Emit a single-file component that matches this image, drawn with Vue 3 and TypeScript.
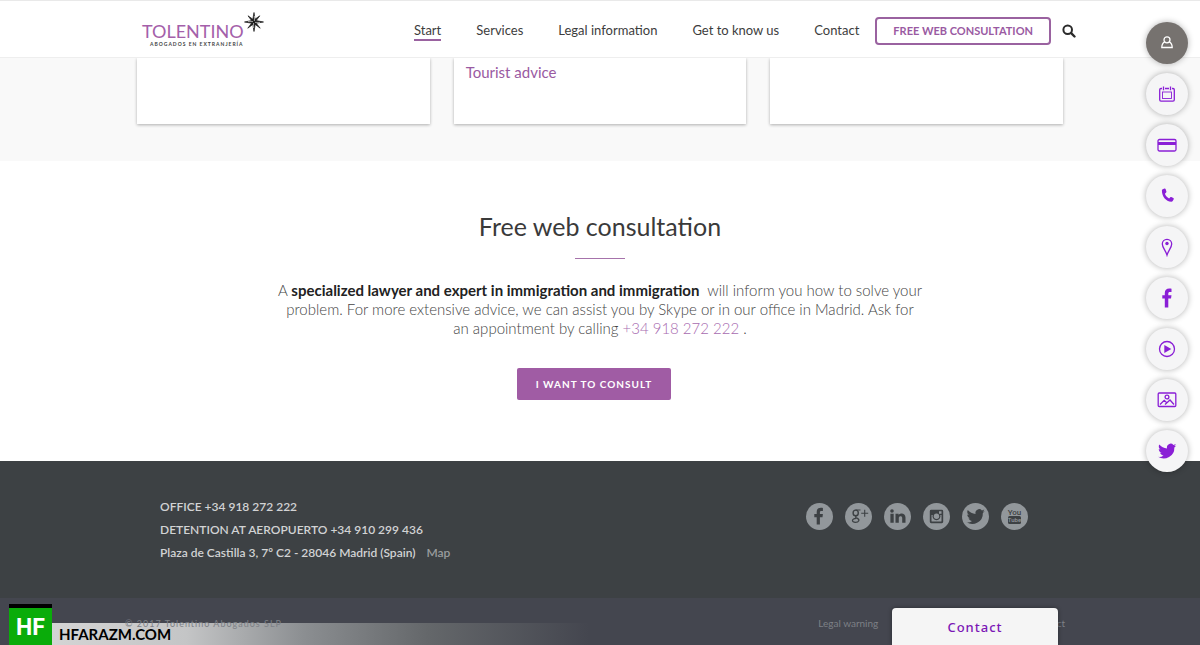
<script setup lang="ts">
interface NavItem {
  label: string
  active?: boolean
}

const navItems: NavItem[] = [
  { label: 'Start', active: true },
  { label: 'Services' },
  { label: 'Legal information' },
  { label: 'Get to know us' },
  { label: 'Contact' },
]

const cards: string[] = ['', 'Tourist advice', '']

const quickActions: string[] = [
  'Account',
  'Calendar',
  'Payment',
  'Phone',
  'Location',
  'Facebook',
  'Video',
  'Gallery',
  'Twitter',
]

const socials: string[] = ['Facebook', 'Google Plus', 'LinkedIn', 'Instagram', 'Twitter', 'YouTube']
</script>

<template>
  <div class="page">
    <header class="header">
      <div class="header-row">
        <a href="#" class="logo" aria-label="Tolentino">
          <span class="logo-name">TOLENTINO</span>
          <span class="logo-sub">ABOGADOS EN EXTRANJERÍA</span>
          <svg class="logo-star" viewBox="0 0 20 20" aria-hidden="true">
            <path fill="#1c1c1c" stroke="#1c1c1c" stroke-width=".7" d="M10 .5l1 6.700 4.800-3.400-3.600 4.800L19.500 10l-7.300 1.200 4 5-5-3.800L10 19.500l-1.200-7.100-5 3.800 3.800-5L.5 10l7.100-1.400-3.600-4.800L8.800 7.200z" />
            <path stroke="#fff" stroke-width=".6" d="M10.400 4v5M11 10.400h5M9.600 11v5M4 9.600h5" />
          </svg>
        </a>
        <nav class="nav" aria-label="Main">
          <a v-for="item in navItems" :key="item.label" href="#" class="nav-link" :class="{ active: item.active }">{{ item.label }}</a>
        </nav>
        <a href="#" class="outline-button">FREE WEB CONSULTATION</a>
        <button class="search" type="button" aria-label="Search">
          <svg viewBox="0 0 14 14" fill="none" stroke="#2b2b2b" stroke-linecap="round">
            <circle cx="5.700" cy="5.700" r="4.300" stroke-width="2" />
            <path d="M9.200 9.200l3.300 3.300" stroke-width="2.400" />
          </svg>
        </button>
      </div>
    </header>

    <section class="cards-band">
      <div class="cards">
        <article v-for="(card, i) in cards" :key="i" class="card">
          <a v-if="card" href="#">{{ card }}</a>
        </article>
      </div>
    </section>

    <main class="consult">
      <h2>Free web consultation</h2>
      <div class="rule"></div>
      <p>
        A <strong>specialized lawyer and expert in immigration and immigration</strong>&nbsp; will inform you how to solve your
        problem. For more extensive advice, we can assist you by Skype or in our office in Madrid. Ask for an appointment by
        calling <a href="#">+34 918 272 222</a> .
      </p>
      <button class="consult-button" type="button">I WANT TO CONSULT</button>
    </main>

    <footer class="footer">
      <div class="footer-main">
        <address>
          <div>OFFICE +34 918 272 222</div>
          <div>DETENTION AT AEROPUERTO +34 910 299 436</div>
          <div>Plaza de Castilla 3, 7º C2 - 28046 Madrid (Spain) <a href="#">Map</a></div>
        </address>
        <div class="socials">
          <a v-for="name in socials" :key="name" href="#" :aria-label="name">
            <svg viewBox="0 0 27 27" fill="#3d4144">
              <path v-if="name === 'Facebook'" d="M10.700 21.500v-7.200H8.300v-3.200h2.400V9c0-2.800 1.500-4.200 4.200-4.200.9 0 1.600.1 2 .2v3h-1.500c-1.200 0-1.500.5-1.500 1.500v1.600h3l-.4 3.200h-2.600v7.200z" />
              <g v-else-if="name === 'Google Plus'" fill="none" stroke="#3d4144">
                <ellipse cx="10.700" cy="9.900" rx="2.600" ry="2.800" stroke-width="1.400" />
                <path d="M10.500 7h5M12 12.500c-2 1.100-2 1.700 0 2.600 3.300 1.500 2 4.200-1.600 4.200-3.900 0-4.200-3.400.7-3.900" stroke-width="1.200" />
                <path d="M19.700 6.800v7M16.200 10.300h7" stroke-width="1.100" />
              </g>
              <path v-else-if="name === 'LinkedIn'" d="M6.400 10.800h3.300v9H6.400zM8 6.200a1.800 1.800 0 1 1 0 3.600 1.800 1.800 0 0 1 0-3.600zM11.500 10.800h3.100v1.300c1.500-2.400 6.900-2.200 6.900 2.400v5.300h-3.300V15c0-2.500-3.400-2.200-3.400 0v4.800h-3.300z" />
              <g v-else-if="name === 'Instagram'">
                <path fill-rule="evenodd" d="M8.200 6.800h10.600a1.400 1.400 0 0 1 1.400 1.400v10.600a1.400 1.400 0 0 1-1.400 1.400H8.200a1.400 1.400 0 0 1-1.400-1.400V8.200a1.400 1.400 0 0 1 1.400-1.400zM8.500 12v6a.6.6 0 0 0 .6.600h8.800a.6.600 0 0 0 .6-.6v-6h-1.200a4 4 0 1 1-7.600 0zM16 8.300v2.400h2.500V8.300z" />
                <circle cx="13.500" cy="13.300" r="2.700" fill="#92979b" />
              </g>
              <path v-else-if="name === 'Twitter'" transform="translate(4.500 4.500) scale(.76)" d="M24 4.600c-.9.400-1.800.7-2.800.8 1-.6 1.800-1.600 2.200-2.700-1 .6-2 1-3.100 1.200A4.900 4.900 0 0 0 11.900 8.400C7.800 8.200 4.200 6.200 1.700 3.200c-1.300 2.200-.7 5.100 1.500 6.600-.8 0-1.600-.2-2.200-.6 0 2.300 1.600 4.400 3.900 4.900-.7.200-1.500.2-2.200.1.600 2 2.400 3.400 4.600 3.400A9.900 9.900 0 0 1 0 19.500a14 14 0 0 0 21.500-12.400c1-.7 1.800-1.600 2.500-2.500z" />
              <g v-else>
                <text class="you" x="13.500" y="11.500" text-anchor="middle">You</text>
                <rect x="7" y="13" width="13" height="8" rx="1.500" />
                <text class="tube" x="13.500" y="19" text-anchor="middle">Tube</text>
              </g>
            </svg>
          </a>
        </div>
      </div>
      <div class="footer-bottom">
        <span class="copyright">© 2017 Tolentino Abogados SLP</span>
        <div class="legal">
          <a href="#">Legal warning</a>
          <a href="#">Contact</a>
        </div>
      </div>
    </footer>

    <aside class="quick" aria-label="Quick actions">
      <button v-for="name in quickActions" :key="name" type="button" :aria-label="name" :class="{ dark: name === 'Account' }">
        <svg viewBox="0 0 20 20" fill="none" stroke="currentColor" stroke-width="1.300">
          <g v-if="name === 'Account'">
            <circle cx="10" cy="6.800" r="3" />
            <path d="M7.700 8.800C5.700 9.800 4.800 11.600 4.800 14.500h10.400c0-2.900-.9-4.700-2.900-5.700" />
          </g>
          <g v-else-if="name === 'Calendar'">
            <path d="M5 4.500H4A1.300 1.300 0 0 0 2.700 5.800v10A1.300 1.300 0 0 0 4 17.100h12a1.300 1.300 0 0 0 1.300-1.300v-10A1.300 1.300 0 0 0 16 4.500h-1M8 4.500h4M6.500 2.500v3.700M13.500 2.500v3.700" />
            <rect x="5.500" y="8" width="9" height="6.500" stroke-width=".9" />
          </g>
          <g v-else-if="name === 'Payment'">
            <rect x="1" y="4.500" width="18" height="11.500" rx="1.500" />
            <path d="M1 7h18v3H1z" fill="currentColor" stroke="none" />
          </g>
          <path v-else-if="name === 'Phone'" fill="currentColor" stroke="none" d="M5.700 3.200l1.800-.7c.5-.2.900 0 1.100.5l.8 2.500c.1.400 0 .7-.3 1L7.900 7.700c.8 2.300 2.200 3.700 4.200 4.700l1.200-1.200c.3-.3.600-.3 1-.2l2 1c.5.300.7.700.4 1.200l-1 1.900c-.3.500-.7.700-1.300.7C8.700 15.500 4.800 10.500 4.900 4.300c0-.6.3-.9.800-1.100z" />
          <g v-else-if="name === 'Location'">
            <path d="M10 18C8.800 13.800 5.300 10.500 5.300 7a4.700 4.700 0 0 1 9.400 0c0 3.500-3.500 6.800-4.700 11z" />
            <circle cx="10" cy="6.500" r="1.700" fill="currentColor" stroke="none" />
          </g>
          <path v-else-if="name === 'Facebook'" fill="currentColor" stroke="none" d="M7.800 19.500v-9H5.300V7.200h2.500V5c0-3 1.600-4.500 4.500-4.500.9 0 1.800.1 2.200.2V4h-1.600c-1.200 0-1.600.6-1.600 1.600v1.600h3.200l-.5 3.300h-2.700v9z" />
          <g v-else-if="name === 'Video'">
            <circle cx="10" cy="10" r="7.500" />
            <path d="M7.300 5.900l7 4.100-7 4.100z" fill="currentColor" stroke="none" />
          </g>
          <g v-else-if="name === 'Gallery'">
            <rect x="1.200" y="3" width="17.600" height="13.500" rx="1" />
            <path d="M3 14.500l4.200-4.200 2.300 2.200M8 14.500l5-4.500 4 4.500" />
            <circle cx="10" cy="7" r="1.900" />
          </g>
          <path v-else fill="currentColor" stroke="none" transform="translate(1 1) scale(.76)" d="M24 4.600c-.9.400-1.800.7-2.800.8 1-.6 1.800-1.600 2.200-2.700-1 .6-2 1-3.100 1.200A4.900 4.900 0 0 0 11.900 8.400C7.800 8.200 4.200 6.200 1.700 3.200c-1.300 2.200-.7 5.100 1.500 6.600-.8 0-1.600-.2-2.200-.6 0 2.300 1.600 4.400 3.900 4.900-.7.200-1.500.2-2.200.1.600 2 2.400 3.400 4.600 3.400A9.900 9.900 0 0 1 0 19.500a14 14 0 0 0 21.500-12.400c1-.7 1.800-1.600 2.500-2.500z" />
        </svg>
      </button>
    </aside>

    <div class="watermark">
      <span class="mark">HF</span>
      <span class="site">HFARAZM.COM</span>
    </div>

    <button class="contact-tab" type="button">Contact</button>
  </div>
</template>

<style>
body {
  margin: 0;
}
</style>

<style scoped>
.page {
  position: relative;
  display: flex;
  flex-direction: column;
  min-height: 100vh;
  overflow: hidden;
  background: #fff;
  color: #3d3d3d;
  font-family: Lato, 'Open Sans', sans-serif;
}

.page * {
  box-sizing: border-box;
}

a {
  color: inherit;
  text-decoration: none;
}

button {
  font-family: inherit;
  cursor: pointer;
}

.header {
  position: relative;
  background: #fff;
  border-top: 1px solid #e9e9e9;
  border-bottom: 1px solid #eee;
}

.header-row {
  display: flex;
  align-items: center;
  max-width: 952px;
  height: 56px;
  margin: 0 auto;
  padding-top: 4px;
}

.logo {
  position: relative;
  display: flex;
  flex-direction: column;
  width: 140px;
  padding: 6px 0 0 18px;
  margin-right: auto;
}

.logo-name {
  color: #a45faa;
  font-size: 18px;
  line-height: 20px;
}

.logo-sub {
  padding-left: 8px;
  color: #444;
  font-size: 5px;
  font-weight: 700;
  line-height: 6px;
  letter-spacing: 1px;
  white-space: nowrap;
}

.logo-star {
  position: absolute;
  top: -3px;
  right: 0;
  width: 20px;
  height: 20px;
}

.nav {
  display: flex;
  gap: 35px;
  margin-right: 16px;
}

.nav-link {
  border-bottom: 2px solid transparent;
  font-size: 13px;
  line-height: 17px;
}

.nav-link.active {
  border-color: #9a62a0;
}

.outline-button {
  padding: 0 16px;
  border: 2px solid #9a62a0;
  border-radius: 4px;
  color: #9a5aa2;
  font-size: 11px;
  font-weight: 700;
  line-height: 24px;
}

.search {
  width: 14px;
  height: 14px;
  margin-left: 11px;
  padding: 0;
  border: 0;
  background: none;
}

.search svg {
  display: block;
}

.cards-band {
  padding-bottom: 37px;
  background: #f9f9f9;
}

.cards {
  display: grid;
  grid-template-columns: repeat(3, 1fr);
  gap: 24px;
  max-width: 926px;
  margin: 0 auto;
}

.card {
  min-height: 66px;
  padding: 4px 12px;
  background: #fff;
  box-shadow: 0 1px 3px rgba(0, 0, 0, 0.3);
  color: #9a5aa2;
  font-size: 15px;
  line-height: 20px;
}

.consult {
  display: flex;
  flex-direction: column;
  align-items: center;
  padding: 49px 24px 61px;
}

h2 {
  margin: 0;
  color: #3a3a3a;
  font-size: 25px;
  font-weight: 400;
  line-height: 32px;
}

.rule {
  width: 50px;
  height: 1px;
  margin: 16px 0 22px;
  background: #a673ab;
}

p {
  max-width: 646px;
  margin: 0 0 30px;
  color: #444;
  font-size: 15px;
  font-weight: 300;
  line-height: 19px;
  text-align: center;
}

p strong {
  color: #222;
  font-weight: 700;
}

p a {
  color: #a86bb0;
}

.consult-button {
  margin-right: 12px;
  padding: 0 19px;
  border: 0;
  border-radius: 2px;
  background: #a05ca4;
  color: #fff;
  font-size: 10px;
  font-weight: 700;
  line-height: 32px;
  letter-spacing: 1px;
}

.footer {
  display: flex;
  flex: 1;
  flex-direction: column;
  background: #44464f;
}

.footer-main {
  display: flex;
  justify-content: space-between;
  padding: 34px 172px 34px 160px;
  background: #3d4144;
}

address {
  color: #d2d3d4;
  font-size: 12px;
  font-style: normal;
  font-weight: 600;
  line-height: 23px;
}

address a {
  margin-left: 8px;
  color: #999c9e;
}

.socials {
  display: flex;
  gap: 12px;
  padding-top: 8px;
}

.socials a {
  width: 27px;
  height: 27px;
  border-radius: 50%;
  background: #92979b;
}

.socials svg {
  display: block;
}

.you,
.tube {
  font-family: Roboto, sans-serif;
  font-size: 8px;
  font-weight: 500;
}

.tube {
  font-size: 6px;
  fill: #92979b;
}

.footer-bottom {
  display: flex;
  justify-content: space-between;
  padding: 16px 135px 12px 125px;
  color: #7d8086;
  font-size: 10px;
  line-height: 19px;
}

.copyright {
  z-index: 2;
  font-size: 9px;
  letter-spacing: 1px;
}

.legal {
  display: flex;
  gap: 152px;
}

.quick {
  position: absolute;
  top: 22px;
  right: 12px;
  display: flex;
  flex-direction: column;
  gap: 9px;
}

.quick button {
  display: flex;
  align-items: center;
  justify-content: center;
  width: 42px;
  height: 42px;
  padding: 0;
  border: 0;
  border-radius: 50%;
  background: #f5f5f6;
  box-shadow: 0 0 6px rgba(0, 0, 0, 0.3);
  color: #8a1fd6;
}

.quick button.dark {
  background: #76726f;
  color: #fff;
}

.quick svg {
  width: 20px;
  height: 20px;
}

.watermark {
  position: absolute;
  bottom: 0;
  left: 9px;
  display: flex;
  align-items: flex-end;
  width: 580px;
}

.mark {
  width: 43px;
  height: 41px;
  border-top: 4px solid #000;
  background: #0aac0a;
  color: #fff;
  font-family: Roboto, sans-serif;
  font-size: 23px;
  font-weight: 700;
  line-height: 40px;
  text-align: center;
}

.site {
  flex: 1;
  padding-left: 7px;
  background: linear-gradient(90deg, #d4d4d4 0%, #c4c5c6 25%, #8b8e91 47%, #64676a 70%, #44464f 100%);
  color: #000;
  font-size: 15px;
  font-weight: 700;
  line-height: 22px;
}

.contact-tab {
  position: absolute;
  right: 142px;
  bottom: 0;
  width: 166px;
  height: 37px;
  border: 0;
  border-radius: 4px 4px 0 0;
  background: #f5f5f5;
  box-shadow: 0 0 4px rgba(0, 0, 0, 0.4);
  color: #7b16b5;
  font-family: 'Noto Sans', sans-serif;
  font-size: 13px;
  font-weight: 500;
  letter-spacing: 1px;
}
</style>
